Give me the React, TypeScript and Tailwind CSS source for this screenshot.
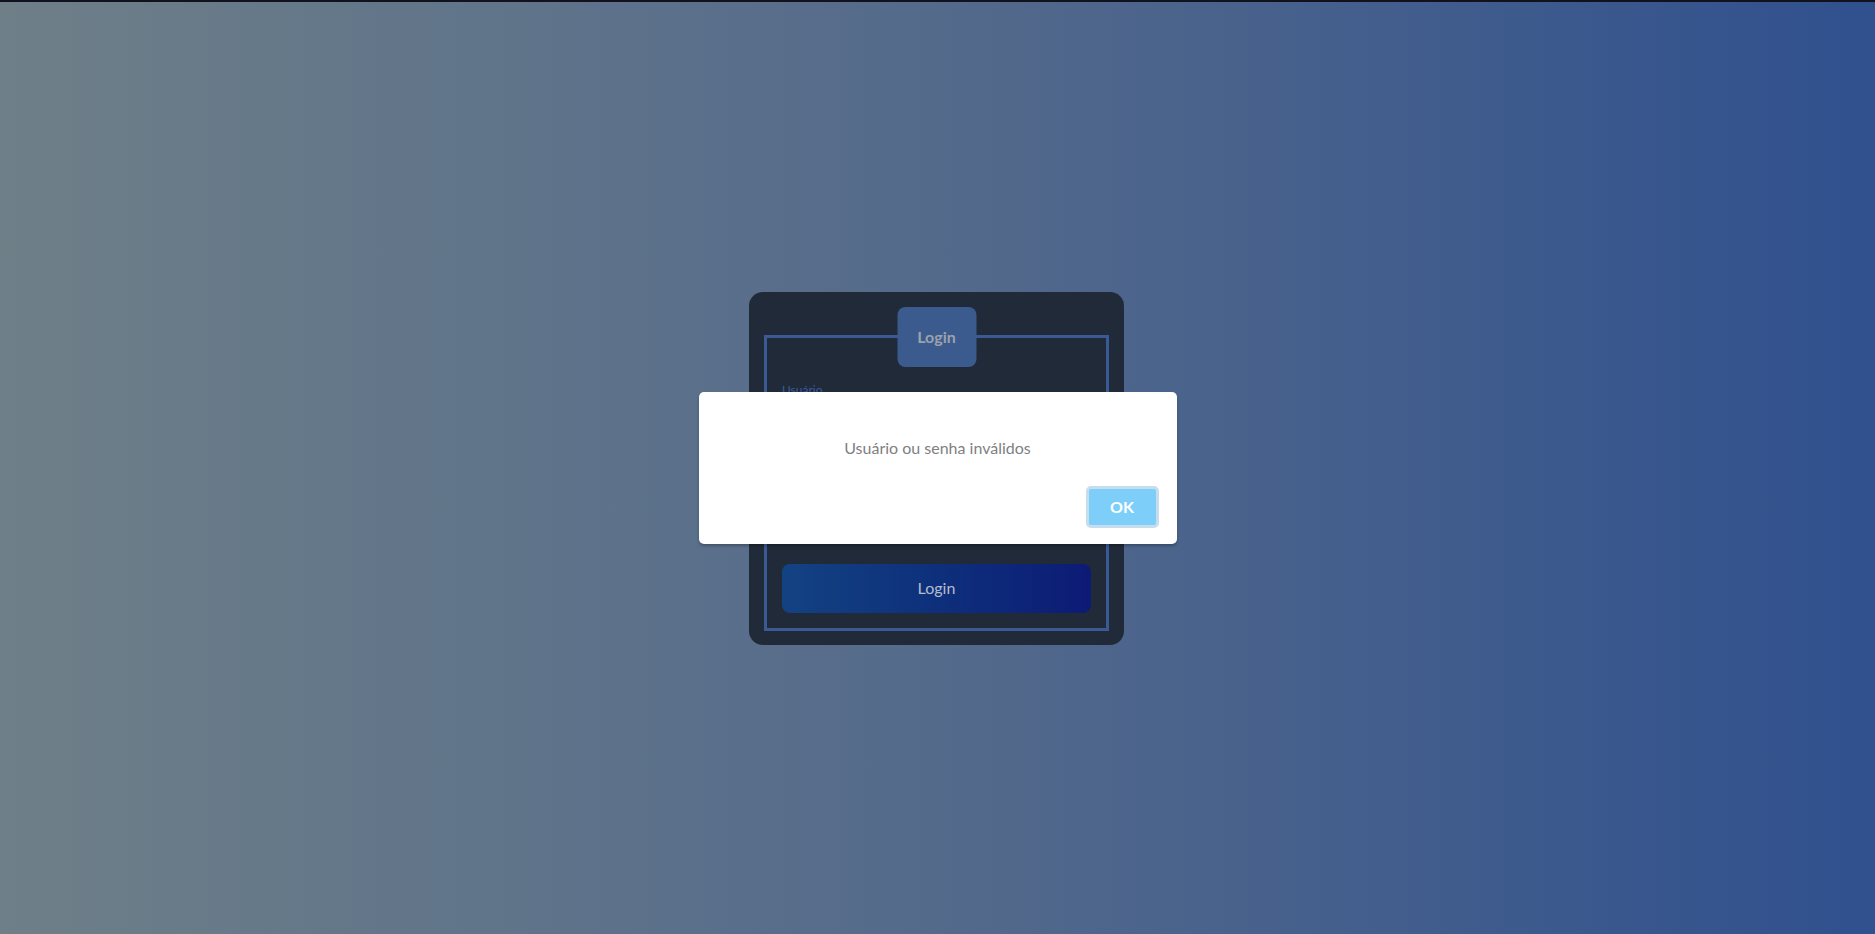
export default function App() {
  return (
    <div className="relative h-[934px] w-full overflow-hidden border-t-2 border-[#12121f] bg-gradient-to-r from-[#6e7f88] via-[#546a8b] to-[#30508e] font-['Lato',sans-serif]">
      <div className="flex h-full items-center justify-center">
        <div className="mr-[2px] w-[375px] rounded-[14px] bg-[#212a38] px-[15px] pb-[14px] pt-[43px]">
          <div className="relative border-[3px] border-[#3a5a95] px-[15px] pb-[15px] pt-[44px]">
            <div className="absolute left-1/2 top-[-31px] flex h-[60px] w-[79px] -translate-x-1/2 items-center justify-center rounded-[8px] bg-[#3b5a8e] text-[16px] font-bold text-[#9aa2ad]">
              Login
            </div>
            <label className="block text-[12px] leading-[15px] text-[#3a5aa0]">Usuário</label>
            <div className="flex h-[167px] flex-col gap-2 pt-2">
              <input className="h-[34px] w-full rounded-[6px] bg-[#1b2330] outline-none" />
              <label className="mt-2 block text-[12px] text-[#3a5aa0]">Senha</label>
              <input type="password" className="h-[34px] w-full rounded-[6px] bg-[#1b2330] outline-none" />
            </div>
            <button className="h-[49px] w-full rounded-[8px] bg-gradient-to-r from-[#134282] to-[#0d1a75] text-[16px] text-[#b4bccb]">
              Login
            </button>
          </div>
        </div>
      </div>

      <div className="absolute inset-0 flex items-center justify-center">
        <div className="flex h-[152px] w-[478px] flex-col rounded-[5px] bg-white pt-[46px] pb-[16px] shadow-[0_2px_3px_rgba(0,0,0,0.25)]">
          <p className="h-[20px] text-center text-[16px] leading-[20px] text-[#808080]">
            Usuário ou senha inválidos
          </p>
          <div className="mt-[28px] flex justify-end pr-[18px]">
            <button className="h-[42px] w-[73px] rounded-[5px] border-[3px] border-[#c6ddee] bg-[#7dcff9] text-[16px] font-bold text-white">
              OK
            </button>
          </div>
        </div>
      </div>
    </div>
  );
}
